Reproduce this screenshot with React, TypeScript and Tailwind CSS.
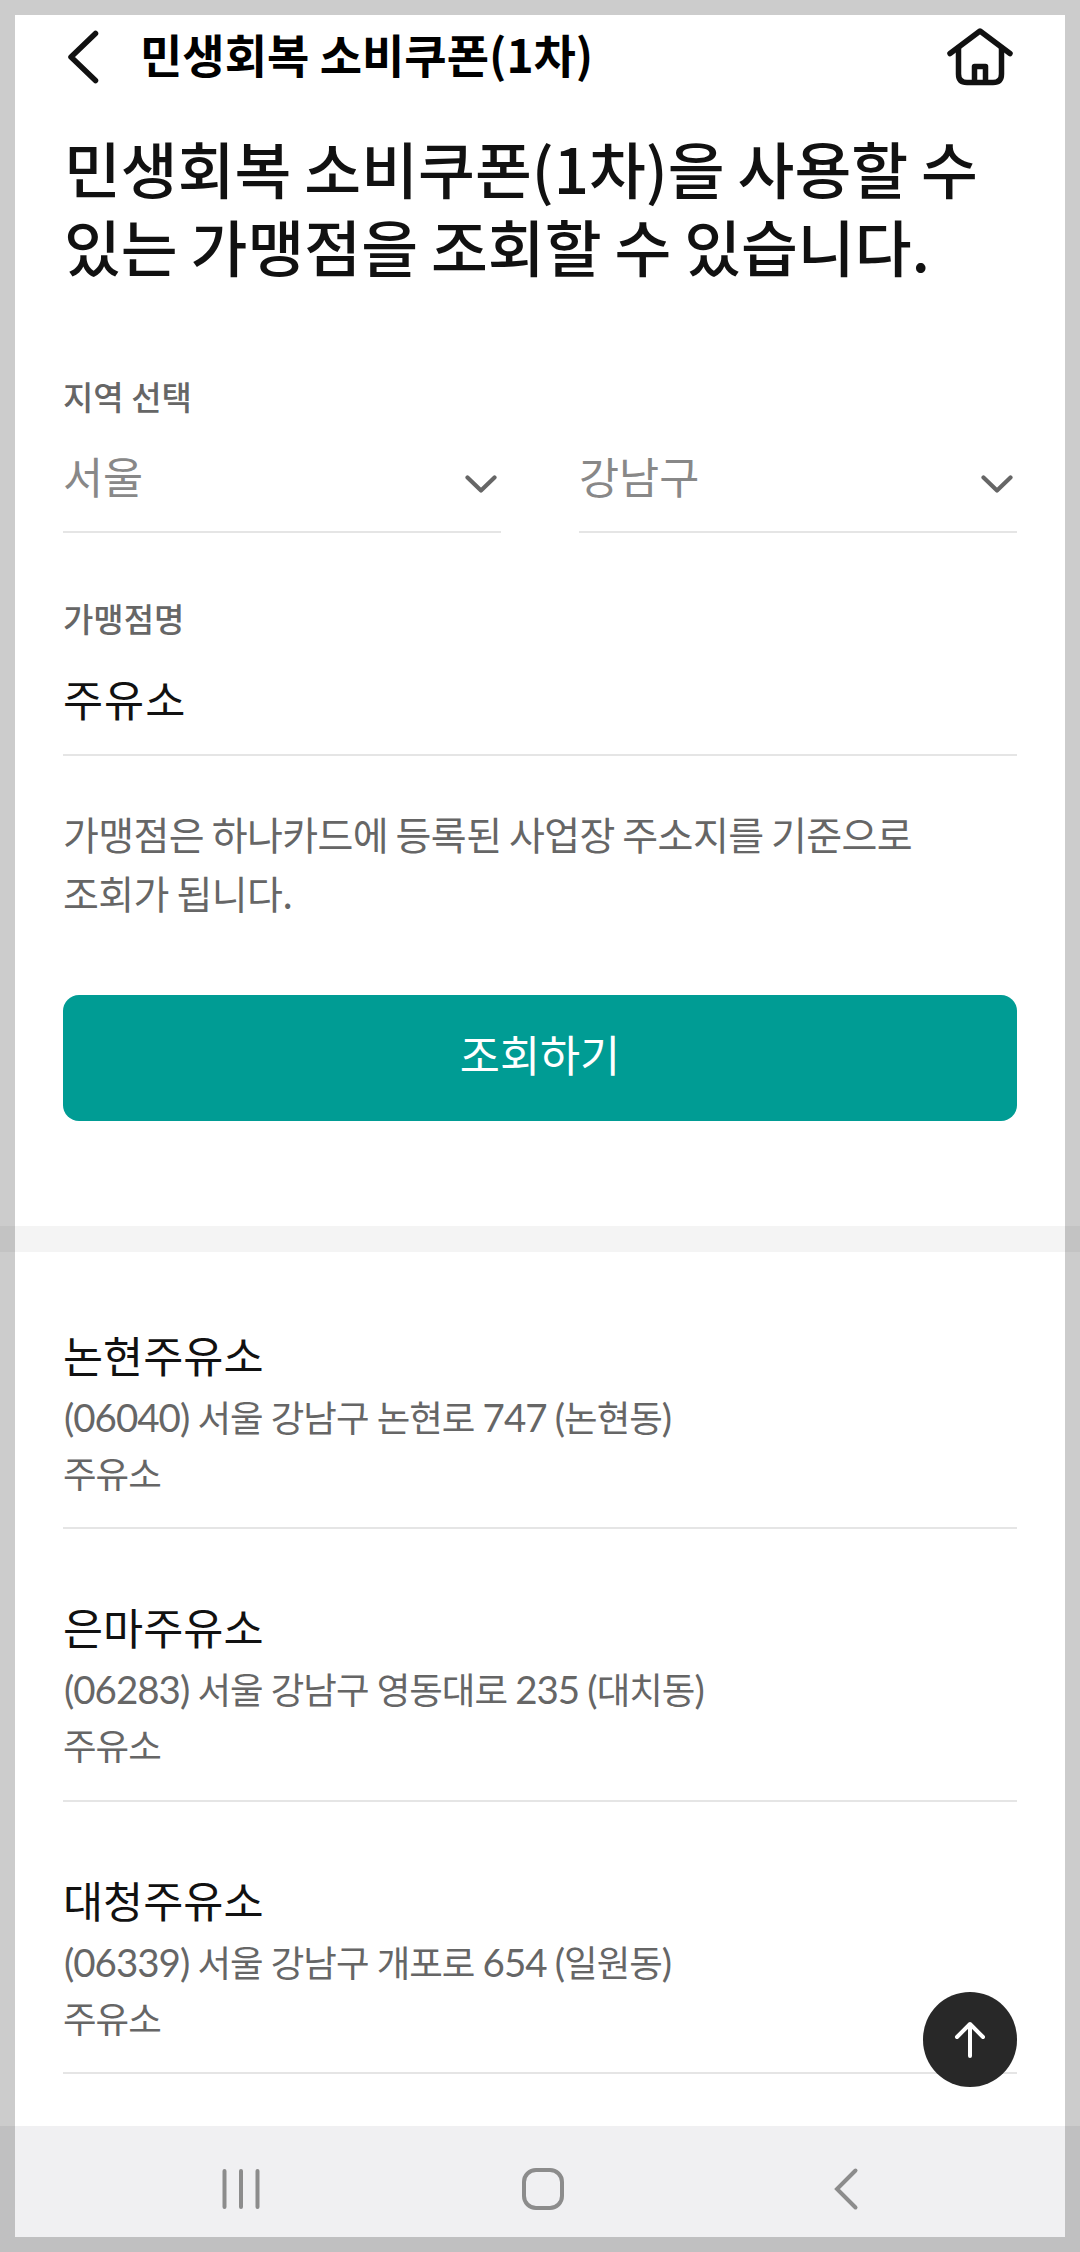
interface Store {
  name: string;
  address: string;
  category: string;
}

const stores: Store[] = [
  {
    name: "논현주유소",
    address: "(06040) 서울 강남구 논현로 747 (논현동)",
    category: "주유소",
  },
  {
    name: "은마주유소",
    address: "(06283) 서울 강남구 영동대로 235 (대치동)",
    category: "주유소",
  },
  {
    name: "대청주유소",
    address: "(06339) 서울 강남구 개포로 654 (일원동)",
    category: "주유소",
  },
];

const Header = () => (
  <header className="flex h-[114px] items-center pr-[67px] pl-[67px]">
    <button type="button" aria-label="뒤로">
      <svg width="32" height="54" viewBox="0 0 32 54" fill="none">
        <path
          d="M28.500 3.500 4 27l24.500 23.500"
          stroke="#111"
          strokeWidth="5.500"
          strokeLinecap="round"
          strokeLinejoin="round"
        />
      </svg>
    </button>
    <h1 className="ml-[41px] pb-[9px] text-[46px] leading-none font-bold text-black">
      민생회복 소비쿠폰(1차)
    </h1>
    <button type="button" aria-label="홈" className="ml-auto">
      <svg width="66" height="58" viewBox="0 0 66 58" fill="none">
        <g
          stroke="#111"
          strokeWidth="5.500"
          strokeLinecap="round"
          strokeLinejoin="round"
        >
          <path d="M3 25.500 33 3l30 22.500" />
          <path d="M11.500 20v26q0 8.500 8.500 8.500h26q8.500 0 8.500-8.500V20" />
          <path d="M27.500 54V38.500h11V54" />
        </g>
      </svg>
    </button>
  </header>
);

const SelectField = ({ value }: { value: string }) => (
  <button
    type="button"
    className="flex h-[114px] flex-1 items-center justify-between border-b-2 border-[#e5e5e5] pt-px pr-1 text-[43.6px] text-[#888]"
  >
    {value}
    <svg width="32" height="18" viewBox="0 0 32 18" fill="none" className="mt-[17px]">
      <path
        d="m2.500 2.500 13.500 13 13.500-13"
        stroke="#666"
        strokeWidth="4.200"
        strokeLinecap="round"
        strokeLinejoin="round"
      />
    </svg>
  </button>
);

// Digits and parentheses use a rounder, slightly larger Latin face
const Address = ({ text }: { text: string }) => (
  <p className="pl-px tracking-[-1px] whitespace-nowrap [word-spacing:1px]">
    {text.split(/([()\d]+)/).map((part, i) =>
      i % 2 ? (
        <span key={i} className="font-['Lato',sans-serif] text-[38.5px] leading-none">
          {part}
        </span>
      ) : (
        part
      )
    )}
  </p>
);

const StoreItem = ({ name, address, category }: Store) => (
  <li className="h-[272.5px] border-b-2 border-[#e5e5e5] pt-[66px] text-[36.5px] leading-[57px] text-[#666]">
    <p className="mb-[3px] text-[43.6px] leading-[62px] text-[#111]">{name}</p>
    <Address text={address} />
    <p className="leading-[55px] tracking-[-1px]">{category}</p>
  </li>
);

const NavBar = () => (
  <nav className="flex h-[126px] items-center bg-[#f0f0f2] pl-[221px]">
    <svg width="40" height="42" viewBox="0 0 40 42">
      <path
        d="M3.500 3v36M20 3v36M36.500 3v36"
        stroke="#8c8c8c"
        strokeWidth="4"
        strokeLinecap="round"
      />
    </svg>
    <svg width="42" height="50" viewBox="0 0 42 50" className="ml-[261px]">
      <rect
        x="2"
        y="6"
        width="38"
        height="38"
        rx="12"
        fill="none"
        stroke="#8c8c8c"
        strokeWidth="4"
      />
    </svg>
    <svg width="26" height="44" viewBox="0 0 26 44" className="ml-[270px]">
      <path
        d="M21.500 3.500 3 22l18.500 18.500"
        fill="none"
        stroke="#8c8c8c"
        strokeWidth="4"
        strokeLinecap="round"
      />
    </svg>
  </nav>
);

export default function App() {
  return (
    <div className="relative flex h-[2252px] w-[1080px] flex-col overflow-hidden bg-white font-['Noto_Sans_CJK_KR',sans-serif]">
      <Header />
      <main className="flex-1">
        <section className="px-[63px] pt-[14px] pb-[105px]">
          <h2 className="pl-px text-[61.8px] leading-[78px] font-medium whitespace-nowrap text-[#111] [word-spacing:-1px]">
            민생회복 소비쿠폰(1차)을 사용할 수
            <br />
            있는 가맹점을 조회할 수 있습니다.
          </h2>

          <p className="mt-[89px] text-[33px] leading-[46px] font-medium text-[#666]">
            지역 선택
          </p>
          <div className="flex gap-[78px]">
            <SelectField value="서울" />
            <SelectField value="강남구" />
          </div>

          <label className="mt-[61px] block text-[33px] leading-[48px] font-medium text-[#666]">
            가맹점명
          </label>
          <div className="flex h-[114px] items-center border-b-2 border-[#e5e5e5] pt-[2px] text-[43.6px] tracking-[1px] text-[#111]">
            주유소
          </div>

          <p className="mt-[48px] text-[39px] leading-[59px] tracking-[-0.6px] whitespace-nowrap text-[#666] [word-spacing:-0.6px]">
            가맹점은 하나카드에 등록된 사업장 주소지를 기준으로
            <br />
            조회가 됩니다.
          </p>
          <button
            type="button"
            className="mt-[73px] flex h-[126px] w-full items-center justify-center rounded-2xl bg-[#009c94] pb-[9px] text-[43.6px] text-white"
          >
            조회하기
          </button>
        </section>

        <div className="h-[26px] bg-[#f4f4f4]" />

        <ul className="px-[63px] pt-[4.5px]">
          {stores.map((store) => (
            <StoreItem key={store.name} {...store} />
          ))}
        </ul>
      </main>
      <NavBar />

      <button
        type="button"
        aria-label="맨 위로"
        className="absolute top-[1992px] left-[923px] flex h-[95px] w-[94px] items-center justify-center rounded-full bg-[#282828]"
      >
        <svg width="32" height="38" viewBox="0 0 32 38" fill="none">
          <path
            d="M16 35V3M3 16 16 3l13 13"
            stroke="#fff"
            strokeWidth="4"
            strokeLinecap="round"
            strokeLinejoin="round"
          />
        </svg>
      </button>

      {/* dimmed edge around the whole screen */}
      <div className="pointer-events-none absolute inset-0 border-15 border-black/20" />
    </div>
  );
}
